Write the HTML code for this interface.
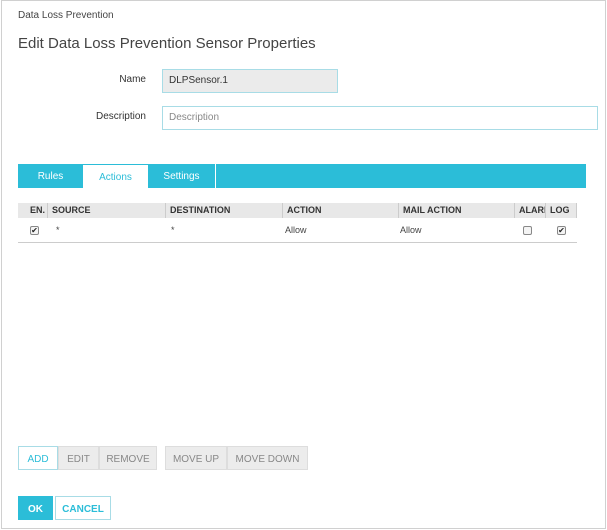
<!DOCTYPE html>
<html><head><style>
*{box-sizing:border-box;margin:0;padding:0}
body{width:607px;height:530px;background:#fff;font-family:"Liberation Sans",sans-serif;position:relative;overflow:hidden}
.frame{position:absolute;left:1px;top:0px;width:605px;height:529px;border:1px solid #d0d0d0}
.a{position:absolute}
.lbl{font-size:10px;color:#333;text-align:right;width:70px}
.inp{border:1px solid #a8dce6;height:24px;font-size:10px;padding:0 6px;line-height:22px;color:#333}
.tab{position:absolute;top:164px;height:24px;font-size:10px;color:#fff;display:flex;align-items:center;justify-content:center}
.th{position:absolute;top:203px;height:15px;background:#e8e8e8;font-size:9px;font-weight:bold;color:#333;line-height:15px;padding-left:4px;border-right:1px solid #ccc;overflow:hidden;white-space:nowrap}
.td{position:absolute;top:218px;height:24px;font-size:9px;color:#444;line-height:24px}
.cb{position:absolute;top:226px;width:9px;height:9px;border:1px solid #888;border-radius:2px;background:#f4f4f4;font-size:8px;line-height:7px;text-align:center;color:#222}
.btn{position:absolute;height:24px;font-size:10px;display:flex;align-items:center;justify-content:center;border:1px solid #ddd;background:#ececec;color:#888;padding-top:2px}
</style></head><body>
<div class="frame"></div>
<div class="a" style="left:18px;top:10px;font-size:10px;color:#444">Data Loss Prevention</div>
<div class="a" style="left:18px;top:35px;font-size:15px;color:#444">Edit Data Loss Prevention Sensor Properties</div>
<div class="a lbl" style="left:76px;top:74px">Name</div>
<div class="a inp" style="left:162px;top:69px;width:176px;background:#ebebeb">DLPSensor.1</div>
<div class="a lbl" style="left:76px;top:111px">Description</div>
<div class="a inp" style="left:162px;top:106px;width:436px;color:#888">Description</div>
<div class="a" style="left:18px;top:164px;width:568px;height:24px;background:#2bbdd8"></div>
<div class="tab" style="left:18px;width:65px">Rules</div>
<div class="tab" style="left:83px;width:65px;background:#fff;color:#2bbdd8;border-top:1px solid #2bbdd8;padding-top:2px">Actions</div>
<div class="tab" style="left:148px;width:68px;border-right:1px solid #fff">Settings</div>
<div class="th" style="left:18px;width:30px;padding-left:12px">EN.</div>
<div class="th" style="left:48px;width:118px">SOURCE</div>
<div class="th" style="left:166px;width:117px">DESTINATION</div>
<div class="th" style="left:283px;width:116px">ACTION</div>
<div class="th" style="left:399px;width:116px">MAIL ACTION</div>
<div class="th" style="left:515px;width:31px">ALARM</div>
<div class="th" style="left:546px;width:31px">LOG</div>
<div class="a" style="left:18px;top:242px;width:559px;height:1px;background:#ccc"></div>
<div class="cb" style="left:30px">✔</div>
<div class="td" style="left:56px">*</div>
<div class="td" style="left:171px">*</div>
<div class="td" style="left:285px">Allow</div>
<div class="td" style="left:400px">Allow</div>
<div class="cb" style="left:523px"></div>
<div class="cb" style="left:557px">✔</div>
<div class="btn" style="left:18px;top:446px;width:40px;background:#fff;border-color:#a8dce6;color:#2bbdd8">ADD</div>
<div class="btn" style="left:58px;top:446px;width:41px">EDIT</div>
<div class="btn" style="left:99px;top:446px;width:58px">REMOVE</div>
<div class="btn" style="left:165px;top:446px;width:62px">MOVE UP</div>
<div class="btn" style="left:227px;top:446px;width:81px">MOVE DOWN</div>
<div class="btn" style="left:18px;top:496px;width:35px;background:#2bbdd8;border-color:#2bbdd8;color:#fff;font-weight:bold">OK</div>
<div class="btn" style="left:55px;top:496px;width:56px;background:#fff;border-color:#a8dce6;color:#2bbdd8;font-weight:bold">CANCEL</div>
</body></html>
